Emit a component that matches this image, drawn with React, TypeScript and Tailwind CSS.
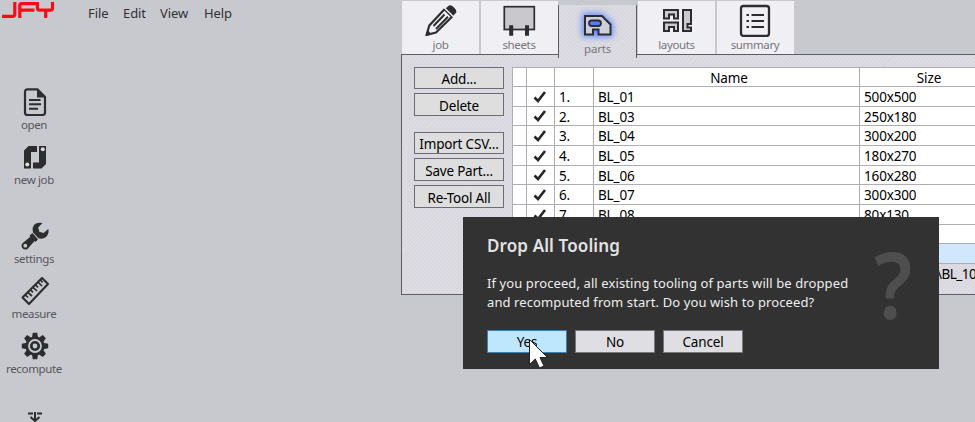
import type { ReactNode } from "react";

const INK = "#2d2d2f";

function Logo() {
  return (
    <svg width="56" height="20" viewBox="0 0 56 20" fill="none" stroke="#fb0a16" strokeWidth="3.2">
      <path d="M2 16.4H12.5Q14.8 16.4 14.8 14.2V2" />
      <path d="M19.8 18V5.4Q19.8 3.6 21.8 3.6H36M20 10.2H34.5" />
      <path d="M37.4 2V8Q37.4 10.2 39.4 10.2H50.5Q52.5 10.2 52.5 8V2M45.7 10V18" />
    </svg>
  );
}

function OpenIcon() {
  return (
    <svg width="28" height="30" viewBox="0 0 28 30">
      <path d="M6.5 2.3H16.5L24 10V25.5Q24 28 21.5 28H6.5Q4 28 4 25.5V4.8Q4 2.3 6.5 2.3Z" fill="none" stroke={INK} strokeWidth="2.2" />
      <path d="M16 2L24.5 10.5H16Z" fill={INK} />
      <path d="M8 13H19.5M8 17.3H20M8 21.7H17" stroke={INK} strokeWidth="2" />
    </svg>
  );
}

function NewJobIcon() {
  return (
    <svg width="28" height="30" viewBox="0 0 28 30">
      <path d="M7.5 4H16V10H10V26.5H3V8.5Z" fill={INK} />
      <path d="M18 4H25V22L20.5 26.5H12V20.5H18Z" fill={INK} />
      <circle cx="21.8" cy="7.3" r="2" fill="#dddde1" />
      <circle cx="6.3" cy="22.5" r="2" fill="#dddde1" />
    </svg>
  );
}

function WrenchIcon() {
  return (
    <svg width="30" height="30" viewBox="0 0 30 30">
      <path d="M22.5 2Q17 0.8 14 4Q12 6.500 12.800 10L13 11.5L18.500 17.3Q22.500 18.500 26 16Q29.500 12.500 28.300 8L23.500 12L19.300 10.700L18.200 6.500Z" fill={INK} />
      <path d="M12.300 12L9.500 14.800L10.300 15.800L2.500 22.200Q0.500 24.500 2.300 27Q4.500 29.500 7.500 28L14.500 20L15.500 21L18 18.200Z" fill={INK} />
      <circle cx="5.300" cy="24.700" r="1.900" fill="#c8c9ce" />
    </svg>
  );
}

function RulerIcon() {
  return (
    <svg width="30" height="30" viewBox="0 0 30 30" fill="none" stroke={INK}>
      <path d="M22 2L28 8L9 28L2.5 21.5Z" strokeWidth="2.1" strokeLinejoin="round" />
      <path d="M5.5 19L8 21.5M8 16.5L12 20M10.5 13.800L13 16.3M13 11.3L17 15M15.5 8.800L18 11.3M18 6.2L22 10M20.3 4L22.6 6.3" strokeWidth="1.7" />
    </svg>
  );
}

function GearIcon() {
  return (
    <svg width="30" height="30" viewBox="-15 -15 30 30" fill={INK}>
      {[0, 45, 90, 135, 180, 225, 270, 315].map((a) => (
        <path key={a} d="M-3.2 -8L-2.2 -13.2H2.2L3.2 -8Z" transform={`rotate(${a})`} />
      ))}
      <circle r="9.6" />
      <circle r="6" fill="none" stroke="#c8c9ce" strokeWidth="1.8" />
      <circle r="2.4" fill="#c8c9ce" />
    </svg>
  );
}

function PencilIcon() {
  return (
    <svg width="34" height="36" viewBox="0 0 34 36">
      <path d="M2.5 34L5.300 24.5L20.500 8.300L28 15.700L12 31.5Z" fill="#f0eff4" stroke={INK} strokeWidth="2.2" strokeLinejoin="round" />
      <path d="M21.500 7.500L25 4.500Q27.500 3.800 30 6.500Q33 9 32.300 11.500L29 15Z" fill={INK} />
      <path d="M19.800 6.300L30.500 16.700" stroke="#f0eff4" strokeWidth="1.500" />
      <path d="M9.500 25L20.500 13.500M12 28L24 15.800" stroke={INK} strokeWidth="2" />
      <path d="M1.500 35.300L3.500 29L7.500 33Z" fill={INK} />
    </svg>
  );
}

function SheetsIcon() {
  return (
    <svg width="34" height="36" viewBox="0 0 34 36">
      <rect x="2.3" y="5.7" width="30" height="22.800" fill="#c9c9cd" stroke={INK} strokeWidth="1.7" />
      <path d="M9.2 24.3V34.8M25 24.3V34.8" stroke={INK} strokeWidth="4" />
    </svg>
  );
}

function PartsIcon() {
  return (
    <svg width="46" height="38" viewBox="0 0 46 38">
      <defs>
        <filter id="glow" x="-40%" y="-40%" width="180%" height="180%">
          <feGaussianBlur stdDeviation="3" />
        </filter>
      </defs>
      <path d="M9 10H26L36 19V30H9Z" fill="#668dff" stroke="#668dff" strokeWidth="4" filter="url(#glow)" />
      <path d="M10 11H27L35.5 19.500V29.500H23.5V24.500H18V29.500H10Z" fill="#ccd0dd" stroke={INK} strokeWidth="2" />
      <rect x="14" y="15.500" width="12" height="5.5" rx="2.7" fill="#4d80ff" stroke={INK} strokeWidth="1.8" />
    </svg>
  );
}

function LayoutsIcon() {
  return (
    <svg width="34" height="36" viewBox="0 0 34 36" fill="#c9c9cf" stroke={INK} strokeWidth="2">
      <path d="M4 9H18V17.500H14V13.500H9V17.500H4Z" />
      <path d="M4 21.500H18V30H14V26H9V30H4Z" />
      <path d="M23 9H31V23H27.500V26.500H31V30H23Z" />
    </svg>
  );
}

function SummaryIcon() {
  return (
    <svg width="34" height="36" viewBox="0 0 34 36" fill="none" stroke={INK}>
      <rect x="3" y="5" width="28" height="30" rx="2.5" strokeWidth="2.3" />
      <path d="M13.500 14H26M13.500 20H26M13.500 26H26" strokeWidth="2" />
      <path d="M8.5 14H11M8.5 20H11M8.5 26H11" strokeWidth="2" />
    </svg>
  );
}

function Check() {
  return (
    <svg width="14" height="14" viewBox="0 0 14 14">
      <path d="M1.5 7.500L5 11L12 2" fill="none" stroke="#262628" strokeWidth="2.6" />
    </svg>
  );
}

function SideItem({ icon, label, className = "" }: { icon: ReactNode; label: string; className?: string }) {
  return (
    <div className={`flex h-[55px] w-[68px] flex-col items-center text-[#55565b] ${className}`}>
      <div className="flex h-[30px] w-[30px] translate-x-px items-center justify-center">{icon}</div>
      <span className="text-[11.5px] leading-4 tracking-[-0.35px]">{label}</span>
    </div>
  );
}

function Tab({ icon, label }: { icon: ReactNode; label: string }) {
  return (
    <div className="mt-px mr-[1.5px] flex h-[53px] w-[77px] shrink-0 flex-col items-center bg-[#f0eff4] text-[#77777c]">
      {icon}
      <span className="text-[11.5px] leading-4 tracking-[-0.35px]">{label}</span>
    </div>
  );
}

function PanelButton({ label, className = "" }: { label: string; className?: string }) {
  return (
    <button className={`flex w-[90px] items-center justify-center border border-[#6c6c74] bg-[#dededf] pt-[2px] text-[13.5px] leading-4 tracking-[-0.2px] whitespace-nowrap text-black ${className}`}>
      {label}
    </button>
  );
}

const rows = [
  { name: "BL_01", size: "500x500", h: "h-[20px]" },
  { name: "BL_03", size: "250x180", h: "h-[19px]" },
  { name: "BL_04", size: "300x200", h: "h-[20px]" },
  { name: "BL_05", size: "180x270", h: "h-[20px]" },
  { name: "BL_06", size: "160x280", h: "h-[19px]" },
  { name: "BL_07", size: "300x300", h: "h-[20px]" },
  { name: "BL_08", size: "80x130", h: "h-[20px]" },
  { name: "", size: "", h: "h-[19px]" },
];

const GRID = "grid grid-cols-[14px_28px_39px_266px_138px] border-b border-[#adadb3]";
const CELL = "flex items-center border-r border-[#adadb3]";
const HATCH = "bg-[repeating-linear-gradient(135deg,#dddde3_0px,#dddde3_1.4px,#d7d6de_1.4px,#d7d6de_2.8px)]";

export default function App() {
  return (
    <div className="relative flex h-[422px] w-[975px] overflow-hidden bg-[#c8c9ce] font-['Noto_Sans',sans-serif]">
      <aside className="w-[401px] shrink-0">
        <header className="flex h-[26px] items-start">
          <div className="w-[88px]"><Logo /></div>
          <nav className="flex pt-[4px] text-[13px] leading-[18px] tracking-[-0.1px] text-[#303136]">
            <span className="w-[35px]">File</span>
            <span className="w-[37px]">Edit</span>
            <span className="w-[44px]">View</span>
            <span>Help</span>
          </nav>
        </header>
        <div className="flex flex-col pt-[61px]">
          <SideItem icon={<OpenIcon />} label="open" />
          <SideItem icon={<NewJobIcon />} label="new job" />
          <SideItem icon={<WrenchIcon />} label="settings" className="mt-6" />
          <SideItem icon={<RulerIcon />} label="measure" />
          <SideItem icon={<GearIcon />} label="recompute" />
          <div className="mt-[25px] pl-[27px]">
            <svg width="16" height="12" viewBox="0 0 16 12" fill="none" stroke={INK} strokeWidth="2">
              <path d="M1 2.500H6M10 2.500H15M8 1V10M3.5 6L8 10L12.5 6" />
            </svg>
          </div>
        </div>
      </aside>

      <main className="flex w-[574px] shrink-0 flex-col">
        <div className="z-10 flex h-[58px] items-start pl-px">
          <Tab icon={<PencilIcon />} label="job" />
          <Tab icon={<SheetsIcon />} label="sheets" />
          <div className={`mt-[5px] ml-[-1px] flex h-[53px] w-[79px] shrink-0 flex-col items-center border-x border-[#5c5c62] text-[#77777c] ${HATCH}`}>
            <PartsIcon />
            <span className="mt-[-2px] text-[11.5px] leading-4 tracking-[-0.2px]">parts</span>
          </div>
          <div className="w-px" />
          <Tab icon={<LayoutsIcon />} label="layouts" />
          <Tab icon={<SummaryIcon />} label="summary" />
        </div>
        <section className={`mt-[-4px] flex h-[241px] items-start border-y border-l border-[#5c5c62] pt-[12px] pl-[12px] ${HATCH}`}>
          <div className="flex w-[98px] flex-col">
            <PanelButton label="Add..." className="h-[22px]" />
            <PanelButton label="Delete" className="mt-1 h-[23px]" />
            <PanelButton label="Import CSV..." className="mt-4 h-[22px]" />
            <PanelButton label="Save Part..." className="mt-1 h-[23px]" />
            <PanelButton label="Re-Tool All" className="mt-1 h-[23px]" />
          </div>
          <div className="flex w-[463px] flex-col border-t border-l border-[#adadb3] bg-white text-[13.5px] leading-4 tracking-[-0.15px] text-black">
            <div className={`h-[19px] ${GRID}`}>
              <div className={CELL} />
              <div className={CELL} />
              <div className={CELL} />
              <div className={`justify-center pt-[2px] pl-[5px] ${CELL}`}>Name</div>
              <div className="flex items-center justify-center pt-[2px]">Size</div>
            </div>
            {rows.map((r, i) => (
              <div key={i} className={`${r.h} ${GRID}`}>
                <div className={CELL} />
                <div className={`justify-center pr-px ${CELL}`}>{r.name && <Check />}</div>
                <div className={`pt-px pl-1 ${CELL}`}>{r.name && `${i + 1}.`}</div>
                <div className={`pt-px pl-[4px] ${CELL}`}>{r.name}</div>
                <div className="flex items-center pt-px pl-[4px]">{r.size}</div>
              </div>
            ))}
            <div className="h-[20px] border-b border-[#adadb3] bg-[#d0e7fc]" />
            <div className={`flex h-[30px] items-start justify-end pt-[2px] whitespace-nowrap ${HATCH}`}>
              <span className="w-[38px] tracking-[-0.5px]">\BL_10</span>
            </div>
          </div>
        </section>
      </main>

      <div role="dialog" className="absolute top-[217px] left-[463px] z-20 flex h-[152px] w-[476px] bg-[#323232] pt-[17px] pl-6 text-[#eeeeee]">
        <div className="w-[380px] shrink-0">
          <h1 className="text-[17px] leading-6 font-semibold tracking-[0.12px] text-[#e2e2e2]">Drop All Tooling</h1>
          <p className="mt-[16px] text-[13px] leading-[19px] tracking-[0.1px] whitespace-nowrap">
            If you proceed, all existing tooling of parts will be dropped
            <br />
            and recomputed from start. Do you wish to proceed?
          </p>
          <div className="mt-[18px] flex gap-2 text-[13.5px] leading-4 tracking-[-0.15px] text-black">
            <button className="h-[23px] w-20 border border-[#3d7fae] bg-[#bee6fd]">Yes</button>
            <button className="h-[23px] w-20 border border-[#77777d] bg-[#dfdee3]">No</button>
            <button className="h-[23px] w-20 border border-[#77777d] bg-[#dfdee3]">Cancel</button>
          </div>
        </div>
        <span className="mt-[3px] ml-[7px] origin-left scale-x-90 text-[92px] leading-[94px] font-semibold text-[#4e4e4e]">?</span>
      </div>
      <svg className="absolute top-[338px] left-[528px] z-30" width="22" height="34" viewBox="0 0 22 34">
        <path d="M1.5 1.5V26.5L7.3 21L11.5 30L16 28L12 19.5H19.5Z" fill="white" stroke="#202024" strokeWidth="1" />
      </svg>
    </div>
  );
}
